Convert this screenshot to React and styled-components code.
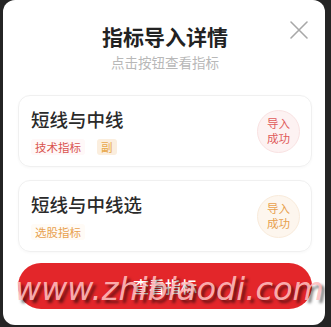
import styled, { createGlobalStyle } from "styled-components";

const GlobalStyle = createGlobalStyle`
  html, body {
    margin: 0;
    padding: 0;
    background: #242424;
  }
  body {
    font-family: "Noto Sans CJK SC", "Noto Sans", sans-serif;
  }
`;

const Screen = styled.div`
  width: 331px;
  height: 327px;
  padding-left: 3px;
  box-sizing: border-box;
  overflow: hidden;
`;

const Modal = styled.div`
  position: relative;
  width: 322px;
  height: 325px;
  box-sizing: border-box;
  background: #fff;
  border-radius: 12px;
  padding: 22px 13px 0 15px;
  display: flex;
  flex-direction: column;
`;

const Title = styled.div`
  text-align: center;
  font-size: 21px;
  line-height: 28px;
  font-weight: 700;
  color: #222;
`;

const Subtitle = styled.div`
  margin-top: 3px;
  text-align: center;
  font-size: 13.5px;
  line-height: 18px;
  color: #b8b8b8;
`;

const Close = styled.button`
  position: absolute;
  top: 20px;
  right: 16px;
  width: 20px;
  height: 20px;
  padding: 0;
  border: none;
  background: none;
`;

const List = styled.div`
  margin-top: 24px;
  display: flex;
  flex-direction: column;
  gap: 13px;
`;

const Card = styled.div`
  display: flex;
  align-items: center;
  justify-content: space-between;
  border: 1px solid #f0f0f0;
  border-radius: 12px;
  padding: 11px 11px 11px 12px;
  box-shadow: 0 1px 3px rgba(0, 0, 0, 0.03);
`;

const Info = styled.div`
  display: flex;
  flex-direction: column;
  gap: 8px;
`;

const Name = styled.div`
  font-size: 18.5px;
  line-height: 24px;
  font-weight: 500;
  color: #2a2a2a;
`;

const Tags = styled.div`
  display: flex;
  align-items: center;
  gap: 12px;
`;

const Tag = styled.span`
  font-size: 11.5px;
  line-height: 16px;
  padding: 0 4px;
  border-radius: 3px;
  color: ${(p) => p.$color};
  background: ${(p) => p.$bg};
`;

const Badge = styled.div`
  width: 43px;
  height: 43px;
  border-radius: 50%;
  box-sizing: border-box;
  border: 1px solid ${(p) => p.$border};
  background: ${(p) => p.$bg};
  color: ${(p) => p.$color};
  font-size: 11.5px;
  line-height: 15px;
  display: flex;
  align-items: center;
  justify-content: center;
  text-align: center;
`;

const Button = styled.button`
  margin-top: 11px;
  height: 46px;
  width: 100%;
  border: none;
  border-radius: 23px;
  background: #e3262a;
  color: #fff;
  font-family: "Noto Sans CJK SC", sans-serif;
  font-size: 16px;
  font-weight: 500;
`;

const Watermark = styled.div`
  position: absolute;
  left: 12px;
  top: 270px;
  font-family: "DejaVu Sans", sans-serif;
  font-style: italic;
  font-size: 32px;
  color: rgba(255, 190, 190, 0.9);
  text-shadow: 3px 3px 3px rgba(0, 0, 0, 0.55);
  white-space: nowrap;
  pointer-events: none;
`;

const red = { color: "#e05a5a", bg: "#fdf2f2", border: "#f9e2e2" };
const orange = { color: "#e8a04c", bg: "#fdf6ee", border: "#f9ebdb" };

const items = [
  {
    name: "短线与中线",
    tags: [
      { text: "技术指标", color: "#d9534f", bg: "#fff8f8" },
      { text: "副", color: "#e8a84c", bg: "#fbeede" },
    ],
    badge: red,
  },
  {
    name: "短线与中线选",
    tags: [{ text: "选股指标", color: "#e8a04c", bg: "#fffbf6" }],
    badge: orange,
  },
];

export default function App() {
  return (
    <Screen>
      <GlobalStyle />
      <Modal>
        <Title>指标导入详情</Title>
        <Subtitle>点击按钮查看指标</Subtitle>
        <Close aria-label="close">
          <svg width="20" height="20" viewBox="0 0 20 20">
            <path d="M2 2L18 18M18 2L2 18" stroke="#a8a8a8" strokeWidth="1.6" strokeLinecap="round" />
          </svg>
        </Close>
        <List>
          {items.map((it) => (
            <Card key={it.name}>
              <Info>
                <Name>{it.name}</Name>
                <Tags>
                  {it.tags.map((t) => (
                    <Tag key={t.text} $color={t.color} $bg={t.bg}>
                      {t.text}
                    </Tag>
                  ))}
                </Tags>
              </Info>
              <Badge $color={it.badge.color} $bg={it.badge.bg} $border={it.badge.border}>
                导入
                <br />
                成功
              </Badge>
            </Card>
          ))}
        </List>
        <Button>查看指标</Button>
        <Watermark>www.zhibiaodi.com</Watermark>
      </Modal>
    </Screen>
  );
}
